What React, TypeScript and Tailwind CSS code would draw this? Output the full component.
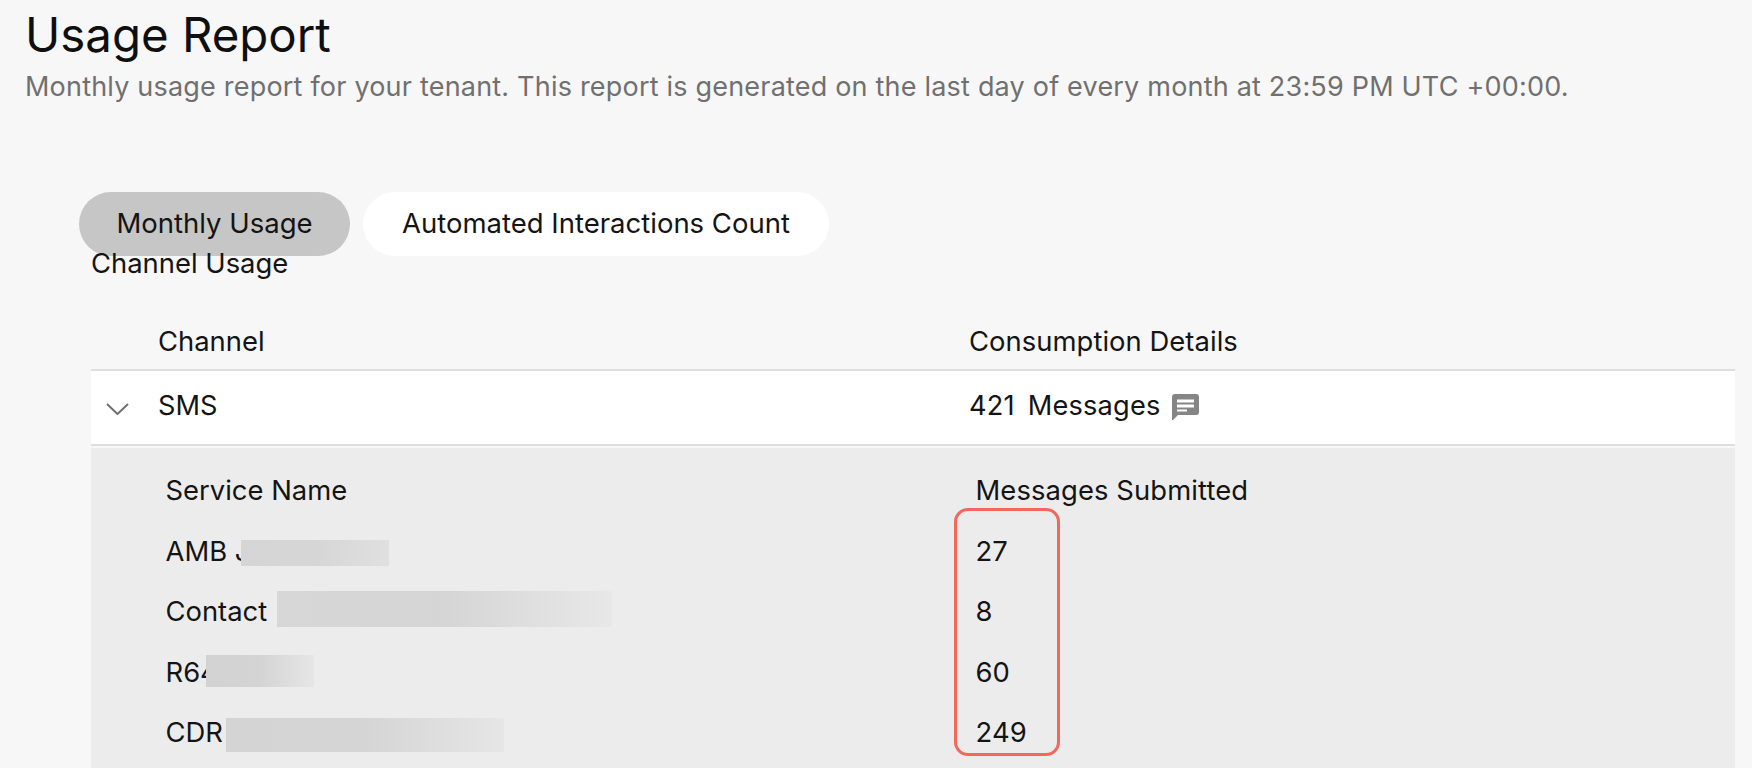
const FONT = "[font-family:Inter,'Noto_Sans',sans-serif]";

function Row({ name, value, redact }: { name: string; value: string; redact: string }) {
  return (
    <div className="flex h-[60.5px] items-center text-[27.4px] leading-[30px] text-[#141414]">
      <div className="relative w-[810px] shrink-0">
        <span>{name}</span>
        <div className={redact} />
      </div>
      <div className="tracking-[0.1px]">{value}</div>
    </div>
  );
}

function ChatIcon() {
  return (
    <svg width="27" height="26" viewBox="0 0 27 26" className="ml-[11px] mt-[3px] shrink-0">
      <path
        d="M3 0H24a3 3 0 0 1 3 3V18a3 3 0 0 1-3 3H6L1 26H0V3a3 3 0 0 1 3-3Z"
        fill="#858585"
      />
      <rect x="5" y="5.5" width="17" height="3" fill="#ffffff" />
      <rect x="5" y="10.5" width="17" height="3" fill="#ffffff" />
      <rect x="5" y="15.5" width="10" height="2" fill="#ffffff" />
    </svg>
  );
}

export default function App() {
  return (
    <div className={`${FONT} relative h-[768px] overflow-hidden bg-[#f7f7f7]`}>
      <div className="pl-[25px]">
        <h1 className="text-[47.4px] font-normal leading-[69px] text-[#0f0f0f]">Usage Report</h1>
        <p className="text-[27px] leading-[36px] tracking-[0.2px] text-[#707070]">
          Monthly usage report for your tenant. This report is generated on the last day of every month at 23:59 PM UTC +00:00.
        </p>
      </div>

      <div className="mt-[87px] flex gap-[13px] pl-[79px] text-[27.5px] leading-[30px] text-[#141414]">
        <button className="flex h-[64px] w-[271px] items-center justify-center rounded-[32px] bg-[#c6c6c6] pb-[2px]">
          Monthly Usage
        </button>
        <button className="flex h-[64px] w-[466px] items-center justify-center rounded-[32px] bg-white pb-[2px]">
          Automated Interactions Count
        </button>
      </div>

      <div className="relative -mt-[8px] pl-[91px] pr-[17px]">
        <div className="text-[27.4px] leading-[30px] text-[#141414]">Channel Usage</div>

        <div className="mt-[48px] flex h-[43px] items-start text-[27.4px] leading-[30px] text-[#141414]">
          <div className="w-[67px] shrink-0" />
          <div className="w-[811px] shrink-0">Channel</div>
          <div className="tracking-[0.05px]">Consumption Details</div>
        </div>

        <div className="flex h-[77px] items-center border-y-2 border-[#dedede] bg-white pb-[4px] text-[27.2px] leading-[30px] text-[#141414]">
          <div className="w-[67px] shrink-0 pl-[15px]">
            <svg width="23" height="12" viewBox="0 0 23 12" fill="none" className="mt-[6px]">
              <path d="M1 1L11.5 11L22 1" stroke="#707070" strokeWidth="2" />
            </svg>
          </div>
          <div className="w-[811px] shrink-0">SMS</div>
          <div className="flex items-center">
            <span className="tracking-[0.2px] [word-spacing:5px]">421 Messages</span>
            <ChatIcon />
          </div>
        </div>

        <div className="mt-[2px] h-[330px] bg-[#ececec] pl-[74.5px] pt-[12px]">
          <Row name="Service Name" value="Messages Submitted" redact="hidden" />
          <Row
            name="AMB J"
            value="27"
            redact="absolute left-[75.5px] top-[4px] h-[26px] w-[148px] bg-gradient-to-r from-[#d5d5d5] via-[#d6d6d6] to-[#e0e0e0]"
          />
          <Row
            name="Contact"
            value="8"
            redact="absolute left-[111.5px] top-[-5px] h-[36px] w-[335px] bg-gradient-to-r from-[#d7d7d7] via-[#d5d5d5] to-[#e8e8e8]"
          />
          <Row
            name="R64"
            value="60"
            redact="absolute left-[40.5px] top-[-2px] h-[32px] w-[108px] bg-gradient-to-r from-[#d2d2d2] via-[#d4d4d4] to-[#e6e6e6]"
          />
          <Row
            name="CDR"
            value="249"
            redact="absolute left-[60.5px] top-[1px] h-[34px] w-[278px] bg-gradient-to-r from-[#d4d4d4] via-[#d5d5d5] to-[#e6e6e6]"
          />
        </div>
      </div>

      <div className="absolute left-[954px] top-[508px] h-[248px] w-[106px] rounded-[14px] border-[3px] border-[#f4675c]" />
    </div>
  );
}
